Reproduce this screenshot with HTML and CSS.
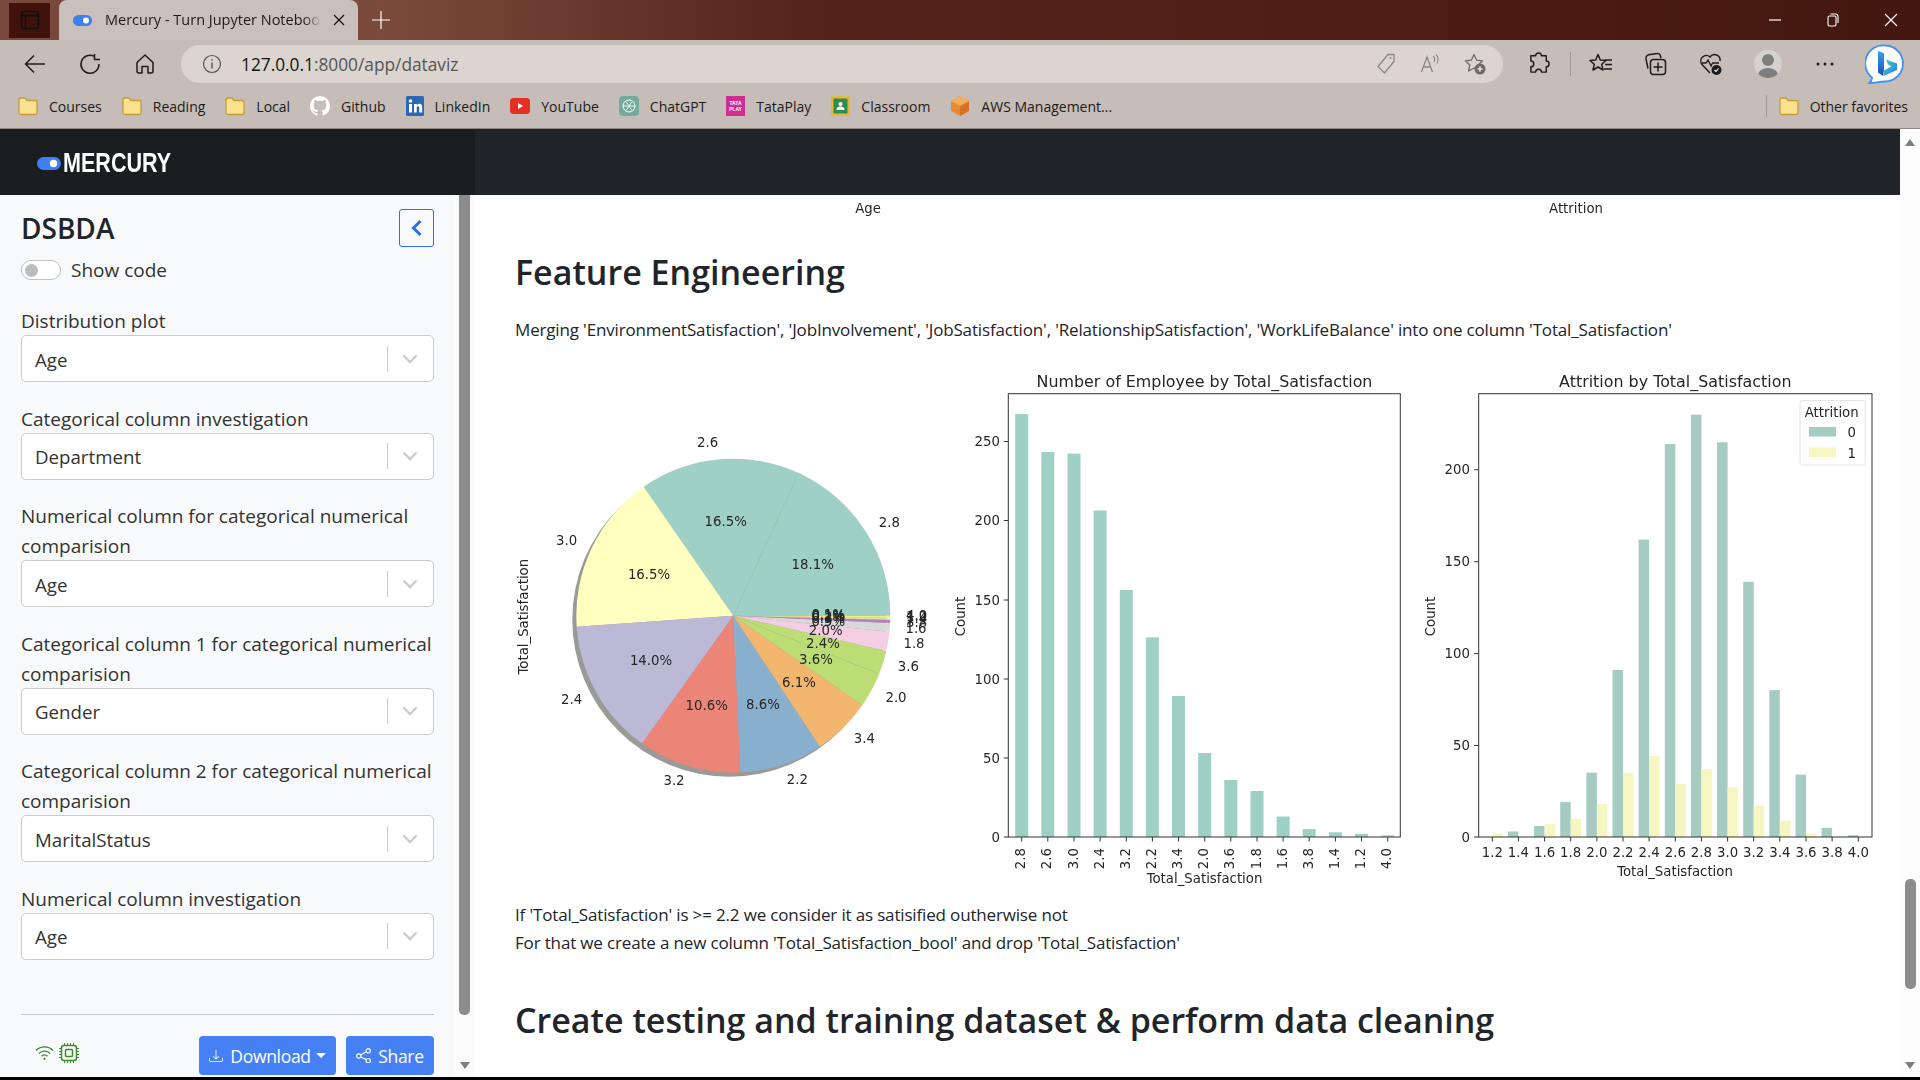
FILE: index.html
```html
<!DOCTYPE html>
<html lang="en">
<head>
<meta charset="utf-8">
<title>Mercury - Turn Jupyter Notebook</title>
<link rel="stylesheet" href="styles.css">
</head>
<body>
<svg class="defs" width="0" height="0">
  <defs>
    <linearGradient id="bingA" x1="0" y1="0" x2="0" y2="1"><stop offset="0" stop-color="#37a0ee"/><stop offset="1" stop-color="#1a4fc4"/></linearGradient>
    <linearGradient id="bingB" x1="0" y1="0" x2="1" y2="1"><stop offset="0" stop-color="#3fd0c8"/><stop offset="1" stop-color="#2a78e0"/></linearGradient>
  </defs>
  <symbol id="folder" viewBox="0 0 20 22"><path d="M1 5A2 2 0 0 1 3 3h4l2 2.500h8a2 2 0 0 1 2 2v10a2 2 0 0 1-2 2H3a2 2 0 0 1-2-2z" fill="#fbe28f" stroke="#c49b3c" stroke-width="1.300"/></symbol>
  <symbol id="chev" viewBox="0 0 16 10"><path d="M1.500 1.500L8 8l6.500-6.500" fill="none" stroke="#cccccc" stroke-width="2.400"/></symbol>
</svg>
<div class="browser">
  <div class="tabstrip">
    <div class="tab-square"><svg width="20" height="20" viewBox="0 0 20 20"><rect x="1.500" y="1.500" width="17" height="17" rx="3" fill="none" stroke="#111" stroke-width="1.500"/><path d="M1.500 5.500h17" stroke="#111" stroke-width="2"/><path d="M5.500 5.500v13" stroke="#111" stroke-width="1.300"/></svg></div>
    <div class="tab">
      <svg class="tab-fav" width="19" height="11" viewBox="0 0 19 11"><rect width="19" height="11" rx="5.500" fill="#3f7ff1"/><circle cx="13" cy="5.500" r="3" fill="#fff"/></svg>
      <span class="tab-title">Mercury - Turn Jupyter Notebook</span>
      <svg class="tab-x" width="12" height="12" viewBox="0 0 12 12"><path d="M1 1l10 10M11 1L1 11" stroke="#111" stroke-width="1.200"/></svg>
    </div>
    <svg class="tab-plus" width="18" height="18" viewBox="0 0 18 18"><path d="M9 0v18M0 9h18" stroke="#fff" stroke-width="1.200"/></svg>
    <div class="winctl">
      <div class="winbtn"><svg width="12" height="12" viewBox="0 0 12 12"><path d="M0 6h12" stroke="#fff" stroke-width="1.200"/></svg></div>
      <div class="winbtn"><svg width="12" height="14" viewBox="0 0 12 14"><rect x="1" y="3" width="8" height="10" rx="1.500" fill="none" stroke="#fff" stroke-width="1.100"/><path d="M3.500 1h5A2.500 2.500 0 0 1 11 3.500V10" fill="none" stroke="#fff" stroke-width="1.100"/></svg></div>
      <div class="winbtn"><svg width="14" height="14" viewBox="0 0 14 14"><path d="M1 1l12 12M13 1L1 13" stroke="#fff" stroke-width="1.200"/></svg></div>
    </div>
  </div>

  <div class="toolbar">
    <div class="nav-btn"><svg width="22" height="20" viewBox="0 0 22 20"><path d="M21 10H2M10 1.500L1.500 10l8.500 8.500" fill="none" stroke="#1c1c1c" stroke-width="1.500"/></svg></div>
    <div class="nav-btn"><svg width="22" height="22" viewBox="0 0 22 22"><path d="M15 3.200A9 9 0 1 0 20 11M15.500 1v5.500H21" fill="none" stroke="#1c1c1c" stroke-width="1.500"/></svg></div>
    <div class="nav-btn"><svg width="22" height="22" viewBox="0 0 22 22"><path d="M11 2l8 7.500V18a2 2 0 0 1-2 2h-3v-6.500H8V20H5a2 2 0 0 1-2-2V9.500z" fill="none" stroke="#1c1c1c" stroke-width="1.500" stroke-linejoin="round"/></svg></div>
    <div class="address">
      <svg width="20" height="20" viewBox="0 0 20 20"><circle cx="10" cy="10" r="8.500" fill="none" stroke="#555" stroke-width="1.200"/><path d="M10 8.500v6M10 5.300v1.500" stroke="#555" stroke-width="1.400"/></svg>
      <span class="url"><span class="url-host">127.0.0.1</span>:8000/app/dataviz</span>
      <div class="addr-icons">
        <svg width="20" height="22" viewBox="0 0 20 22"><path d="M12 1.500h6v7L8.500 20 2 13.500z" fill="none" stroke="#8c8682" stroke-width="1.300" stroke-linejoin="round"/><circle cx="14.500" cy="5" r="1" fill="#8c8682"/></svg>
        <svg width="20" height="22" viewBox="0 0 20 22"><path d="M1.500 19L7 4l5.500 15M3.500 14h7" fill="none" stroke="#8c8682" stroke-width="1.300"/><path d="M13 3c2 1.500 2 4 1 6M16 1.500c2.500 2.500 2.500 6 1 9" fill="none" stroke="#8c8682" stroke-width="1.100"/></svg>
        <svg width="22" height="22" viewBox="0 0 22 22"><path d="M10 1.500l2.600 5.600 6 .7-4.400 4.200 1.200 6L10 15l-5.400 3 1.200-6L1.400 7.800l6-.7z" fill="none" stroke="#6f6a66" stroke-width="1.300" stroke-linejoin="round"/><circle cx="16" cy="16" r="5.500" fill="#6f6a66"/><path d="M16 13.200v5.600M13.200 16h5.600" stroke="#fff" stroke-width="1.200"/></svg>
      </div>
    </div>
    <div class="ext-btn"><svg width="22" height="24" viewBox="0 0 22 24"><path d="M8 5a3 3 0 0 1 6 0h5v5.500a3 3 0 0 1 0 6V22h-5a3 3 0 0 0-6 0H3v-5.500a3 3 0 0 0 0-6V5z" fill="none" stroke="#1c1c1c" stroke-width="1.500" stroke-linejoin="round" transform="translate(0 -1) scale(.96)"/></svg></div>
    <div class="tool-sep"></div>
    <div class="tool-btn"><svg width="24" height="24" viewBox="0 0 24 24"><path d="M9 2.500l2.300 5.500 5.700.5-4.300 3.800 1.300 5.700L9 15l-5 3 1.300-5.700L1 8.500 6.700 8z" fill="none" stroke="#1c1c1c" stroke-width="1.500" stroke-linejoin="round"/><path d="M16 8h7M16 12.500h7M15 17h8" stroke="#1c1c1c" stroke-width="1.400"/></svg></div>
    <div class="tool-btn"><svg width="24" height="24" viewBox="0 0 24 24"><rect x="6.500" y="7.500" width="15" height="15" rx="3" fill="none" stroke="#1c1c1c" stroke-width="1.500"/><path d="M4 16.500L2 7a3.500 3.500 0 0 1 2.700-4.200L13 1.500a3 3 0 0 1 3.500 2.500l.3 2" fill="none" stroke="#1c1c1c" stroke-width="1.500"/><path d="M14 10.500v9M9.500 15h9" stroke="#1c1c1c" stroke-width="1.500"/></svg></div>
    <div class="tool-btn"><svg width="24" height="24" viewBox="0 0 24 24"><path d="M11 21L3 12.500A5.500 5.500 0 0 1 11 5a5.500 5.500 0 0 1 10 4" fill="none" stroke="#1c1c1c" stroke-width="1.500"/><path d="M3 11h4l2-3 3 6 1.500-3H20" fill="none" stroke="#1c1c1c" stroke-width="1.300"/><circle cx="17.500" cy="18" r="5" fill="#1c1c1c"/><path d="M15.500 18l1.500 1.500 2.500-3" fill="none" stroke="#fff" stroke-width="1.100"/></svg></div>
    <div class="tool-btn tool-wide"><div class="avatar"><svg width="28" height="28" viewBox="0 0 28 28"><circle cx="14" cy="10" r="6" fill="#7f7f7f"/><ellipse cx="14" cy="25" rx="10" ry="7" fill="#7f7f7f"/></svg></div></div>
    <div class="tool-btn tool-narrow"><svg width="18" height="4" viewBox="0 0 18 4"><circle cx="2" cy="2" r="1.500" fill="#1c1c1c"/><circle cx="9" cy="2" r="1.500" fill="#1c1c1c"/><circle cx="16" cy="2" r="1.500" fill="#1c1c1c"/></svg></div>
    <div class="bing-btn"><svg width="40" height="40" viewBox="0 0 40 40"><path d="M20 1.500a18 18 0 0 1 0 36c-5 0-11 1.500-15.500 1.500 1.500-1.500 2.500-3.500 2.500-5.500A18 18 0 0 1 20 1.500z" fill="#fff" stroke="#3f8fee" stroke-width="1.800"/><path d="M13 7l6 2.200v17.300l-1 5.500-5-3.500z" fill="url(#bingA)"/><path d="M19 26.500l7.500-4.300-3.500-1.700-2-5 11 4v6.500l-13.500 6z" fill="url(#bingB)"/></svg></div>
  </div>

  <div class="bookmarks">
    <div class="bm"><svg class="bm-ico" width="20" height="22"><use href="#folder"/></svg><span>Courses</span></div>
    <div class="bm"><svg class="bm-ico" width="20" height="22"><use href="#folder"/></svg><span>Reading</span></div>
    <div class="bm"><svg class="bm-ico" width="20" height="22"><use href="#folder"/></svg><span>Local</span></div>
    <div class="bm"><svg class="bm-ico" width="20" height="20" viewBox="0 0 16 16"><path fill="#fff" d="M8 0C3.580 0 0 3.580 0 8c0 3.540 2.290 6.530 5.470 7.590.4.070.55-.17.55-.38 0-.19-.01-.82-.01-1.490-2.010.37-2.530-.49-2.690-.94-.09-.23-.48-.94-.82-1.130-.28-.15-.68-.52-.01-.53.63-.01 1.080.58 1.230.82.72 1.210 1.870.87 2.330.66.07-.52.28-.87.51-1.070-1.780-.2-3.640-.89-3.640-3.950 0-.87.31-1.590.82-2.150-.08-.2-.36-1.020.08-2.120 0 0 .67-.21 2.200.82.64-.18 1.320-.27 2-.27.68 0 1.360.09 2 .27 1.530-1.040 2.200-.82 2.200-.82.44 1.100.16 1.920.08 2.120.51.56.82 1.270.82 2.150 0 3.070-1.870 3.750-3.650 3.950.29.25.54.73.54 1.480 0 1.070-.01 1.930-.01 2.200 0 .21.15.46.55.38A8.013 8.013 0 0 0 16 8c0-4.420-3.580-8-8-8z"/></svg><span>Github</span></div>
    <div class="bm"><svg class="bm-ico" width="18" height="20" viewBox="0 0 18 20"><rect width="18" height="20" rx="1.500" fill="#2c67b5"/><rect x="3" y="8" width="3" height="8.500" fill="#fff"/><circle cx="4.500" cy="5" r="1.800" fill="#fff"/><path d="M8 8h2.800v1.300c.5-.9 1.500-1.500 2.700-1.500 2 0 2.700 1.400 2.700 3.400v5.300h-3v-4.700c0-1-.3-1.600-1.200-1.600s-1.300.7-1.300 1.600v4.700H8z" fill="#fff"/></svg><span>LinkedIn</span></div>
    <div class="bm"><svg class="bm-ico" width="20" height="16" viewBox="0 0 20 16"><rect width="20" height="16" rx="3.500" fill="#e62e22"/><path d="M8 5l5 3-5 3z" fill="#fff"/></svg><span>YouTube</span></div>
    <div class="bm"><svg class="bm-ico" width="20" height="20" viewBox="0 0 20 20"><rect width="20" height="20" rx="4" fill="#74aa9c"/><circle cx="10" cy="10" r="6" fill="none" stroke="#fff" stroke-width="1"/><path d="M7 5.500l6 9M13 5.500l-6 9M4 10h12" stroke="#fff" stroke-width=".8"/></svg><span>ChatGPT</span></div>
    <div class="bm"><svg class="bm-ico" width="19" height="20" viewBox="0 0 19 20"><rect width="19" height="20" fill="#cf2d92"/><text class="tata" x="9.500" y="9" text-anchor="middle">TATA</text><text class="tata" x="9.500" y="15" text-anchor="middle">PLAY</text></svg><span>TataPlay</span></div>
    <div class="bm"><svg class="bm-ico" width="19" height="20" viewBox="0 0 19 20"><rect width="19" height="20" rx="1" fill="#e6b93c"/><rect x="2.500" y="2.500" width="14" height="15" fill="#2d8c4e"/><circle cx="9.500" cy="8" r="2" fill="#fff"/><path d="M5.500 14c0-3 2-3.500 4-3.500s4 .5 4 3.500z" fill="#fff"/></svg><span>Classroom</span></div>
    <div class="bm"><svg class="bm-ico" width="20" height="22" viewBox="0 0 20 22"><path d="M10 1l9 5v10l-9 5-9-5V6z" fill="#e78a38"/><path d="M10 11l9-5v10l-9 5z" fill="#d86f24"/><path d="M10 1l9 5-9 5-9-5z" fill="#f4ad5e"/></svg><span>AWS Management...</span></div>
    <div class="bm bm-other"><svg class="bm-ico" width="20" height="22"><use href="#folder"/></svg><span>Other favorites</span></div>
  </div>

  <div class="app">
    <div class="app-main">
      <header class="navbar">
        <div class="brand">
          <svg width="24" height="13" viewBox="0 0 24 13"><rect width="24" height="13" rx="6.500" fill="#3f7ff1"/><circle cx="16.500" cy="6.500" r="3.700" fill="#fff"/></svg>
          <span class="brand-text">MERCURY</span>
        </div>
        <div class="nav-rest"></div>
      </header>
      <div class="app-body">
        <aside class="sidebar">
          <div class="side-head">
            <h3 class="side-title">DSBDA</h3>
            <button class="collapse-btn"><svg width="13" height="18" viewBox="0 0 13 18"><path d="M10.500 2L3.500 9l7 7" fill="none" stroke="#2f6fe4" stroke-width="3"/></svg></button>
          </div>
          <div class="show-code"><span class="switch"><span class="knob"></span></span><span>Show code</span></div>
          <div class="field"><div class="f-label">Distribution plot</div><div class="select"><span class="sel-val">Age</span><span class="sel-sep"></span><svg class="sel-chev" width="16" height="10"><use href="#chev"/></svg></div></div>
          <div class="field"><div class="f-label">Categorical column investigation</div><div class="select"><span class="sel-val">Department</span><span class="sel-sep"></span><svg class="sel-chev" width="16" height="10"><use href="#chev"/></svg></div></div>
          <div class="field"><div class="f-label">Numerical column for categorical numerical comparision</div><div class="select"><span class="sel-val">Age</span><span class="sel-sep"></span><svg class="sel-chev" width="16" height="10"><use href="#chev"/></svg></div></div>
          <div class="field"><div class="f-label">Categorical column 1 for categorical numerical comparision</div><div class="select"><span class="sel-val">Gender</span><span class="sel-sep"></span><svg class="sel-chev" width="16" height="10"><use href="#chev"/></svg></div></div>
          <div class="field"><div class="f-label">Categorical column 2 for categorical numerical comparision</div><div class="select"><span class="sel-val">MaritalStatus</span><span class="sel-sep"></span><svg class="sel-chev" width="16" height="10"><use href="#chev"/></svg></div></div>
          <div class="field"><div class="f-label">Numerical column investigation</div><div class="select"><span class="sel-val">Age</span><span class="sel-sep"></span><svg class="sel-chev" width="16" height="10"><use href="#chev"/></svg></div></div>
          <div class="side-foot">
            <div class="status">
              <svg width="19" height="14" viewBox="0 0 19 14"><path d="M1 4.500a12 12 0 0 1 17 0M3.800 7.500a8 8 0 0 1 11.400 0M6.500 10.300a4 4 0 0 1 6 0" fill="none" stroke="#3c8a2e" stroke-width="1.300"/><circle cx="9.500" cy="12.800" r="1.100" fill="#3c8a2e"/></svg>
              <svg width="20" height="20" viewBox="0 0 20 20"><rect x="2.500" y="2.500" width="15" height="15" rx="2.500" fill="none" stroke="#3c8a2e" stroke-width="1.500"/><rect x="6.500" y="6.500" width="7" height="7" rx="1" fill="none" stroke="#3c8a2e" stroke-width="1.500"/><path d="M5.500 0v2.500M8.500 0v2.500M11.500 0v2.500M14.500 0v2.500M5.500 17.500V20M8.500 17.500V20M11.500 17.500V20M14.500 17.500V20M0 5.500h2.500M0 8.500h2.500M0 11.500h2.500M0 14.500h2.500M17.500 5.500H20M17.500 8.500H20M17.500 11.500H20M17.500 14.500H20" stroke="#3c8a2e" stroke-width="1"/></svg>
            </div>
            <button class="btn btn-dl"><svg width="14" height="14" viewBox="0 0 16 16" fill="#fff"><path d="M.5 9.900a.5.5 0 0 1 .5.5v2.500a1 1 0 0 0 1 1h12a1 1 0 0 0 1-1v-2.500a.5.5 0 0 1 1 0v2.500a2 2 0 0 1-2 2H2a2 2 0 0 1-2-2v-2.500a.5.5 0 0 1 .5-.5z"/><path d="M7.646 11.854a.5.5 0 0 0 .708 0l3-3a.5.5 0 0 0-.708-.708L8.500 10.293V1.500a.5.5 0 0 0-1 0v8.793L5.354 8.146a.5.5 0 1 0-.708.708l3 3z"/></svg><span>Download</span><span class="caret"></span></button>
            <button class="btn btn-share"><svg width="15" height="15" viewBox="0 0 16 16"><g fill="none" stroke="#fff" stroke-width="1.200"><circle cx="13" cy="3" r="2.300"/><circle cx="3" cy="8.500" r="2.300"/><circle cx="13" cy="13.500" r="2.300"/><path d="M5 7.400l6-3.300M5 9.600l6 2.800"/></g></svg><span>Share</span></button>
          </div>
        </aside>
        <div class="side-scroll">
          <div class="side-thumb"></div>
          <div class="arrow-down"></div>
        </div>
        <main class="content">
          <svg class="fig-strip" width="1365" height="22" viewBox="515 195 1365 22">
            <text class="t13 c" x="868" y="208">Age</text>
            <text class="t13 c" x="1576" y="208">Attrition</text>
          </svg>
          <h2 class="heading h-first">Feature Engineering</h2>
          <p class="para para-merge">Merging 'EnvironmentSatisfaction', 'JobInvolvement', 'JobSatisfaction', 'RelationshipSatisfaction', 'WorkLifeBalance' into one column 'Total_Satisfaction'</p>
          <svg class="figure" width="1365" height="525" viewBox="515 365 1365 525">
            <!-- pie -->
            <g transform="translate(733.3 615.7)">
              <circle cx="-4" cy="4" r="157" fill="#9a9a98"/>
              <path class="p-teal" d="M0 0L157 0A157 157 0 0 0 65.500-142.700z"/>
              <path class="p-teal" d="M0 0L65.500-142.700A157 157 0 0 0-89.600-128.900z"/>
              <path fill="#ffffbf" d="M0 0L-89.600-128.900A157 157 0 0 0-156.600 11z"/>
              <path fill="#bcb9d6" d="M0 0L-156.600 11A157 157 0 0 0-91.200 127.800z"/>
              <path fill="#ea8577" d="M0 0L-91.200 127.800A157 157 0 0 0 7.200 156.800z"/>
              <path fill="#89afcf" d="M0 0L7.200 156.800A157 157 0 0 0 86.600 131z"/>
              <path fill="#f2b66f" d="M0 0L86.600 131A157 157 0 0 0 129 89.500z"/>
              <path fill="#bcdd74" d="M0 0L129 89.500A157 157 0 0 0 145.800 58.300z"/>
              <path fill="#bcdd74" d="M0 0L145.800 58.300A157 157 0 0 0 153 35.200z"/>
              <path fill="#f4cee3" d="M0 0L153 35.200A157 157 0 0 0 156.200 16.100z"/>
              <path fill="#d9d9d9" d="M0 0L156.200 16.100A157 157 0 0 0 156.800 7.400z"/>
              <path fill="#bc80bd" d="M0 0L156.800 7.400A157 157 0 0 0 157 4.100z"/>
              <path fill="#ccebc5" d="M0 0L157 4.100A157 157 0 0 0 157 2z"/>
              <path fill="#ffed6f" d="M0 0L157 2A157 157 0 0 0 157 0z"/>
              <path d="M0 0L145.800 58.300M0 0L65.500-142.700" stroke="#8fc2a0" stroke-width=".4" opacity=".6"/>
            </g>
            <g class="t13 c">
              <text x="707.700" y="442.300">2.6</text><text x="889.300" y="522">2.8</text><text x="566.700" y="540">3.0</text>
              <text x="571.700" y="699.300">2.4</text><text x="674" y="780">3.2</text><text x="797.300" y="779">2.2</text>
              <text x="864.300" y="738.300">3.4</text><text x="896" y="697.300">2.0</text><text x="908.300" y="666">3.6</text>
              <text x="914" y="643.300">1.8</text><text x="916" y="628.300">1.6</text>
              <text x="916.700" y="622">3.8</text><text x="916.700" y="618">1.4</text><text x="916.700" y="616">1.2</text><text x="916.700" y="615">4.0</text>
              <text x="812.700" y="564">18.1%</text><text x="725.700" y="521">16.5%</text><text x="649" y="574.300">16.5%</text>
              <text x="651" y="660.700">14.0%</text><text x="706.700" y="705.700">10.6%</text><text x="763" y="704.700">8.6%</text>
              <text x="799" y="682.700">6.1%</text><text x="816" y="659.700">3.6%</text><text x="823" y="643.300">2.4%</text><text x="825.700" y="630">2.0%</text>
              <text x="828.300" y="621.700">0.9%</text><text x="828.300" y="618">0.3%</text><text x="828.300" y="616">0.2%</text><text x="828.300" y="615">0.1%</text><text x="828.300" y="614.500">0.1%</text>
              <text transform="translate(523.300 616.700) rotate(-90)">Total_Satisfaction</text>
            </g>

            <!-- bar chart 1 -->
            <text class="t15 c" x="1204.500" y="381">Number of Employee by Total_Satisfaction</text>
            <g class="teal" transform="translate(0 837) scale(1 -1)">
              <rect x="1015.200" width="13" height="422.900"/><rect x="1041.300" width="13" height="384.900"/><rect x="1067.500" width="13" height="383.400"/>
              <rect x="1093.600" width="13" height="326.500"/><rect x="1119.800" width="13" height="247"/><rect x="1145.900" width="13" height="199.600"/>
              <rect x="1172" width="13" height="141"/><rect x="1198.200" width="13" height="84"/><rect x="1224.300" width="13" height="57"/>
              <rect x="1250.500" width="13" height="46"/><rect x="1276.600" width="13" height="20.500"/><rect x="1302.700" width="13" height="7.900"/>
              <rect x="1328.900" width="13" height="4.700"/><rect x="1355" width="13" height="3.200"/><rect x="1381.200" width="13" height="1.600"/>
            </g>
            <rect class="axes" x="1008.300" y="393.700" width="392" height="443.300"/>
            <path class="tick" d="M1003.800 837h4.500M1003.800 758h4.500M1003.800 679h4.500M1003.800 600h4.500M1003.800 520.500h4.500M1003.800 441.500h4.500M1021.700 837v4.500M1047.800 837v4.500M1074 837v4.500M1100.100 837v4.500M1126.300 837v4.500M1152.400 837v4.500M1178.500 837v4.500M1204.700 837v4.500M1230.800 837v4.500M1257 837v4.500M1283.100 837v4.500M1309.200 837v4.500M1335.400 837v4.500M1361.500 837v4.500M1387.700 837v4.500"/>
            <g class="t13 e">
              <text x="1000" y="837">0</text><text x="1000" y="758">50</text><text x="1000" y="679">100</text><text x="1000" y="600">150</text><text x="1000" y="520.500">200</text><text x="1000" y="441.500">250</text>
            </g>
            <g class="t13 e">
              <text transform="translate(1020.700 848) rotate(-90)">2.8</text><text transform="translate(1046.800 848) rotate(-90)">2.6</text><text transform="translate(1073 848) rotate(-90)">3.0</text>
              <text transform="translate(1099.100 848) rotate(-90)">2.4</text><text transform="translate(1125.300 848) rotate(-90)">3.2</text><text transform="translate(1151.400 848) rotate(-90)">2.2</text>
              <text transform="translate(1177.500 848) rotate(-90)">3.4</text><text transform="translate(1203.700 848) rotate(-90)">2.0</text><text transform="translate(1229.800 848) rotate(-90)">3.6</text>
              <text transform="translate(1256 848) rotate(-90)">1.8</text><text transform="translate(1282.100 848) rotate(-90)">1.6</text><text transform="translate(1308.200 848) rotate(-90)">3.8</text>
              <text transform="translate(1334.400 848) rotate(-90)">1.4</text><text transform="translate(1360.500 848) rotate(-90)">1.2</text><text transform="translate(1386.700 848) rotate(-90)">4.0</text>
            </g>
            <g class="t13 c">
              <text x="1204.500" y="878">Total_Satisfaction</text>
              <text transform="translate(960.700 616.500) rotate(-90)">Count</text>
            </g>

            <!-- bar chart 2 -->
            <text class="t15 c" x="1675.300" y="381">Attrition by Total_Satisfaction</text>
            <g class="teal2" transform="translate(0 837) scale(1 -1)">
              <rect x="1507.900" width="10.500" height="5.500"/><rect x="1534.100" width="10.500" height="11"/><rect x="1560.200" width="10.500" height="34.900"/>
              <rect x="1586.400" width="10.500" height="64.300"/><rect x="1612.500" width="10.500" height="167"/><rect x="1638.600" width="10.500" height="297.400"/>
              <rect x="1664.800" width="10.500" height="392.900"/><rect x="1690.900" width="10.500" height="422.300"/><rect x="1717.100" width="10.500" height="394.700"/>
              <rect x="1743.200" width="10.500" height="255.200"/><rect x="1769.300" width="10.500" height="146.900"/><rect x="1795.500" width="10.500" height="62.400"/>
              <rect x="1821.600" width="10.500" height="9.200"/><rect x="1847.800" width="10.500" height="1.800"/>
            </g>
            <g class="pale" transform="translate(0 837) scale(1 -1)">
              <rect x="1492.300" width="10.500" height="3.700"/><rect x="1544.600" width="10.500" height="12.900"/><rect x="1570.700" width="10.500" height="18.400"/>
              <rect x="1596.900" width="10.500" height="33"/><rect x="1623" width="10.500" height="64.300"/><rect x="1649.100" width="10.500" height="80.800"/>
              <rect x="1675.300" width="10.500" height="53.200"/><rect x="1701.400" width="10.500" height="67.900"/><rect x="1727.600" width="10.500" height="49.600"/>
              <rect x="1753.700" width="10.500" height="31.200"/><rect x="1779.800" width="10.500" height="16.500"/><rect x="1806" width="10.500" height="3.700"/>
            </g>
            <rect class="axes axes2" x="1478.700" y="393.700" width="393.300" height="443.300"/>
            <path class="tick" d="M1474.200 837h4.500M1474.200 745.500h4.500M1474.200 653.600h4.500M1474.200 561.700h4.500M1474.200 469.700h4.500M1492.300 837v4.500M1518.400 837v4.500M1544.600 837v4.500M1570.700 837v4.500M1596.900 837v4.500M1623 837v4.500M1649.100 837v4.500M1675.300 837v4.500M1701.400 837v4.500M1727.600 837v4.500M1753.700 837v4.500M1779.800 837v4.500M1806 837v4.500M1832.100 837v4.500M1858.300 837v4.500"/>
            <g class="t13 e">
              <text x="1470" y="837">0</text><text x="1470" y="745.500">50</text><text x="1470" y="653.600">100</text><text x="1470" y="561.700">150</text><text x="1470" y="469.700">200</text>
            </g>
            <g class="t13 c">
              <text x="1492.300" y="852.500">1.2</text><text x="1518.400" y="852.500">1.4</text><text x="1544.600" y="852.500">1.6</text><text x="1570.700" y="852.500">1.8</text>
              <text x="1596.900" y="852.500">2.0</text><text x="1623" y="852.500">2.2</text><text x="1649.100" y="852.500">2.4</text><text x="1675.300" y="852.500">2.6</text>
              <text x="1701.400" y="852.500">2.8</text><text x="1727.600" y="852.500">3.0</text><text x="1753.700" y="852.500">3.2</text><text x="1779.800" y="852.500">3.4</text>
              <text x="1806" y="852.500">3.6</text><text x="1832.100" y="852.500">3.8</text><text x="1858.300" y="852.500">4.0</text>
              <text x="1675" y="871">Total_Satisfaction</text>
              <text transform="translate(1430.700 616.500) rotate(-90)">Count</text>
            </g>
            <rect class="legend" x="1800" y="400.600" width="65.300" height="64.400" rx="2.500"/>
            <rect x="1809" y="427" width="27" height="9.500" fill="#a5cbc3"/>
            <rect x="1809" y="447.500" width="27" height="9.500" fill="#f6f6c2"/>
            <g class="t13 c">
              <text x="1831.700" y="412.700">Attrition</text>
              <text x="1851.700" y="432.700">0</text>
              <text x="1851.700" y="453">1</text>
            </g>
          </svg>
          <p class="para para-note">If 'Total_Satisfaction' is &gt;= 2.2 we consider it as satisified outherwise not<br>For that we create a new column 'Total_Satisfaction_bool' and drop 'Total_Satisfaction'</p>
          <h2 class="heading h-second">Create testing and training dataset &amp; perform data cleaning</h2>
        </main>
      </div>
    </div>
    <div class="page-scroll">
      <div class="arrow-up"></div>
      <div class="page-thumb"></div>
      <div class="arrow-down page-down"></div>
    </div>
  </div>
  <div class="edge"></div>
</div>
</body>
</html>
```
FILE: styles.css
```css
* { box-sizing: border-box; }
html, body { margin: 0; padding: 0; height: 100%; overflow: hidden; background: #fff; }
body { font-family: "Open Sans", "Noto Sans", sans-serif; color: #212529; }
.defs { position: absolute; }
.browser { width: 1920px; height: 1080px; display: flex; flex-direction: column; }

/* tab strip */
.tabstrip { height: 40px; flex: none; display: flex; align-items: center; padding-left: 9px;
  background: linear-gradient(90deg, #77493c 0, #7a4a3c 20%, #53251b 42%, #4c1d14 75%, #43170f 100%); }
.tab-square { width: 41px; height: 35px; margin-right: 9px; background: #3f130b; display: flex; align-items: center; justify-content: center; }
.tab { width: 299px; height: 40px; background: #c9c0bb; border-radius: 8px 8px 0 0; display: flex; align-items: center; padding-left: 14px; }
.tab-fav { flex: none; }
.tab-title { width: 216px; margin-left: 13px; font-size: 14.5px; line-height: 22px; white-space: nowrap; overflow: hidden; color: #1b1b1b;
  -webkit-mask-image: linear-gradient(90deg, #000 92%, transparent); mask-image: linear-gradient(90deg, #000 92%, transparent); }
.tab-x { margin-left: 12px; flex: none; }
.tab-plus { margin-left: 14px; }
.winctl { margin-left: auto; display: flex; }
.winbtn { width: 58px; height: 40px; display: flex; align-items: center; justify-content: center; }

/* toolbar */
.toolbar { height: 48px; flex: none; background: #c6bdb8; display: flex; align-items: center; padding-left: 7.5px; }
.nav-btn { width: 55px; display: flex; justify-content: center; }
.address { width: 1322px; height: 38px; margin-left: 8.5px; background: #dcd5cf; border-radius: 19px; display: flex; align-items: center; padding: 0 17px 0 21px; }
.url { margin-left: 19px; font-size: 17.3px; color: #555; white-space: nowrap; }
.url-host { color: #111; }
.addr-icons { margin-left: auto; display: flex; gap: 24px; align-items: center; }
.ext-btn { width: 28px; margin-left: 22px; display: flex; justify-content: center; }
.tool-sep { width: 1px; height: 24px; background: #9d9691; margin-left: 17px; margin-right: 2px; }
.tool-btn { width: 55px; display: flex; justify-content: center; align-items: center; }
.tool-wide { width: 60px; }
.tool-narrow { width: 54px; }
.avatar { width: 28px; height: 28px; border-radius: 50%; background: #d5d3d0; overflow: hidden; }
.bing-btn { width: 40px; margin-left: 13px; display: flex; justify-content: center; }

/* bookmarks */
.bookmarks { height: 41px; flex: none; background: #c6bdb8; border-bottom: 1px solid #8d8682; display: flex; align-items: center; padding: 0 0 4px 18px; gap: 20px; font-size: 14px; color: #1b1b1b; }
.bm { display: flex; align-items: center; gap: 11px; white-space: nowrap; }
.bm-ico { flex: none; }
.bm-other { margin-left: auto; margin-right: 12px; border-left: 1px solid #a29b96; padding-left: 12px; }
.tata { font: 700 5px "Liberation Sans", sans-serif; fill: #fff; }

/* app */
.app { flex: 1; min-height: 0; display: flex; }
.app-main { flex: 1; min-width: 0; display: flex; flex-direction: column; }
.navbar { height: 66px; flex: none; display: flex; }
.brand { width: 475px; background: #1a1e21; display: flex; align-items: center; gap: 2px; padding: 2px 0 0 37px; }
.brand-text { font: 700 28px "Liberation Sans", sans-serif; color: #fff; transform: scaleX(.77); transform-origin: left center; }
.nav-rest { flex: 1; background: #212529; }
.app-body { flex: 1; min-height: 0; display: flex; }

/* sidebar */
.sidebar { width: 454px; flex: none; background: #f8f9fa; padding: 14px 20px 2px 21px; display: flex; flex-direction: column; }
.side-head { height: 38px; flex: none; display: flex; justify-content: space-between; align-items: center; }
.side-title { margin: 0; font-size: 28px; font-weight: 600; line-height: 38px; }
.collapse-btn { width: 35px; height: 38px; padding: 0; background: transparent; border: 1px solid #2f6fe4; border-radius: 3px; display: flex; align-items: center; justify-content: center; }
.show-code { height: 24px; margin-top: 11px; display: flex; align-items: center; gap: 10px; font-size: 19px; line-height: 26px; color: #333; flex: none; }
.switch { width: 40px; height: 20px; border: 1px solid #bfbfbf; border-radius: 10px; background: #fff; display: flex; align-items: center; padding-left: 3px; }
.knob { width: 13px; height: 13px; border-radius: 50%; background: #bdbdbd; }
.field { margin-top: 20.600px; flex: none; }
.show-code + .field { margin-top: 23px; }
.f-label { font-size: 19px; line-height: 30px; color: #333; padding-top: 1px; margin-bottom: -1px; }
.select { height: 47px; background: #fff; border: 1px solid #ccc; border-radius: 5px; display: flex; align-items: center; padding: 0 15px 0 13px; font-size: 18.7px; color: #333; }
.sel-val { flex: 1; padding-top: 1px; }
.sel-sep { width: 1px; height: 26px; background: #ccc; margin-right: 14px; }
.sel-chev { flex: none; }
.side-foot { margin-top: auto; border-top: 1px solid #c8c8c8; padding-top: 21px; display: flex; align-items: center; flex: none; }
.status { display: flex; align-items: center; gap: 5px; margin-left: 14px; margin-right: auto; margin-top: -6px; }
.btn { height: 39px; border: 0; border-radius: 4px; background: #4680f5; color: #fff; font: 17.5px "Open Sans", sans-serif; letter-spacing: -.3px; display: flex; align-items: center; justify-content: center; gap: 7px; padding: 0; }
.btn-dl { width: 137px; }
.btn-share { width: 88px; margin-left: 10px; }
.caret { width: 0; height: 0; border-left: 5px solid transparent; border-right: 5px solid transparent; border-top: 5px solid #fff; margin-left: -2px; }

.side-scroll { width: 20px; flex: none; background: #fbfbfb; display: flex; flex-direction: column; align-items: center; padding-bottom: 8px; }
.side-thumb { width: 11px; height: 820px; background: #8c8c8c; border-radius: 0 0 5px 5px; margin-left: 1px; }
.arrow-down { width: 0; height: 0; margin-top: auto; margin-left: 1px; border-left: 5.5px solid transparent; border-right: 5.5px solid transparent; border-top: 7px solid #7d7d7d; }
.arrow-up { width: 0; height: 0; border-left: 5.5px solid transparent; border-right: 5.5px solid transparent; border-bottom: 7px solid #7d7d7d; margin-top: 10px; }

/* content */
.content { flex: 1; min-width: 0; padding-left: 41px; overflow: hidden; }
.fig-strip, .figure { display: block; filter: blur(.4px); }
.heading { margin: 0; font-size: 34px; font-weight: 600; line-height: 48px; color: #212529; white-space: nowrap; }
.h-first { margin-top: 31px; }
.h-second { margin-top: 39px; }
.para { margin: 0; font-size: 17px; letter-spacing: -.16px; line-height: 28px; color: #212529; white-space: nowrap; }
.para-merge { margin-top: 19.500px; }
.figure { margin-top: 21.500px; }
.para-note { margin-top: 11px; }

/* svg text */
.t13 { font: 13.3px "DejaVu Sans", sans-serif; fill: #262626; }
.t15 { font: 15.9px "DejaVu Sans", sans-serif; fill: #262626; }
.c { text-anchor: middle; dominant-baseline: central; }
.c text { text-anchor: middle; dominant-baseline: central; }
.e text { text-anchor: end; dominant-baseline: central; }
.p-teal { fill: #9ed0c6; }
.teal rect { fill: #9ed0c6; }
.teal2 rect { fill: #a5cbc3; }
.pale rect { fill: #f6f6c2; }
.axes { fill: none; stroke: #333; stroke-width: 1; }
.tick { stroke: #333; stroke-width: 1; fill: none; }
.legend { fill: #fff; fill-opacity: .8; stroke: #e2e2e2; stroke-width: 1; }

/* page scrollbar */
.page-scroll { width: 20px; flex: none; background: #fdfdfd; display: flex; flex-direction: column; align-items: center; padding-bottom: 8px; }
.page-thumb { width: 11px; height: 110px; margin-top: 733px; background: #8c8c8c; border-radius: 5px; }
.page-down { margin-left: 0; }

.edge { height: 3px; flex: none; background: #000; }
```
